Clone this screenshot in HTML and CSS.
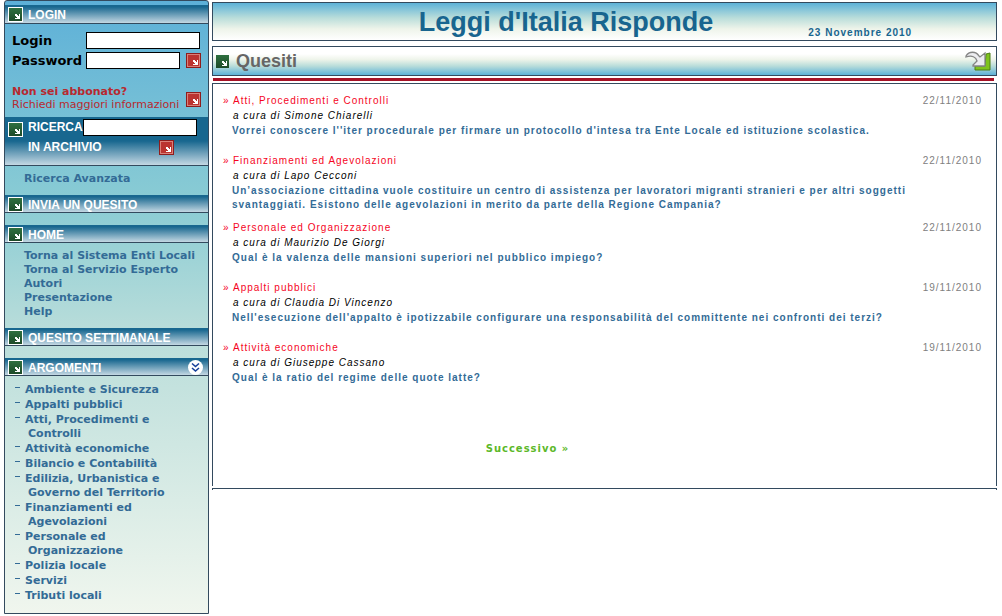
FILE: index.html
```html
<!DOCTYPE html>
<html lang="it">
<head>
<meta charset="utf-8">
<title>Leggi d'Italia Risponde</title>
<link rel="stylesheet" href="styles.css">
</head>
<body>
<svg class="defs" aria-hidden="true">
  <defs>
    <symbol id="corner" viewBox="0 0 13 13">
      <path d="M6 6h2v1h1v1h1V6h1v5H6v-1h2V9H7V8H6z" fill="#fff"/>
    </symbol>
    <symbol id="send" viewBox="0 0 15 15">
      <path d="M0 0h15v15H0z" fill="#8e1c1c"/>
      <path d="M1 1h13v13H1z" fill="#d98078"/>
      <path d="M2 2h11v11H2z" fill="#bb3430"/>
      <path d="M7 7h2v1h1v1h1V7h1v5H7v-1h2v-1H8V9H7z" fill="#fff"/>
    </symbol>
  </defs>
</svg>
<div class="page">
  <aside class="sidebar">
    <h2 class="bar"><svg class="mark"><use href="#corner"/></svg>LOGIN</h2>
    <form class="login">
      <div class="field"><label for="user">Login</label><input id="user" type="text" class="wide"></div>
      <div class="field"><label for="pass">Password</label><input id="pass" type="password"><button type="button" class="send" aria-label="Entra"><svg><use href="#send"/></svg></button></div>
      <div class="subscribe">
        <p><strong>Non sei abbonato?</strong><br><a href="#">Richiedi maggiori informazioni</a></p>
        <button type="button" class="send" aria-label="Richiedi"><svg><use href="#send"/></svg></button>
      </div>
    </form>
    <form class="search">
      <svg class="mark"><use href="#corner"/></svg>
      <div class="search-body">
        <div class="search-row"><label for="query">RICERCA</label><input id="query" type="text" class="wide"></div>
        <div class="search-row archive"><label for="query">IN ARCHIVIO</label><button type="button" class="send" aria-label="Cerca"><svg><use href="#send"/></svg></button></div>
      </div>
    </form>
    <p class="advanced"><a href="#">Ricerca Avanzata</a></p>
    <h2 class="bar"><svg class="mark"><use href="#corner"/></svg><a href="#">INVIA UN QUESITO</a></h2>
    <h2 class="bar spaced"><svg class="mark"><use href="#corner"/></svg>HOME</h2>
    <ul class="links">
      <li><a href="#">Torna al Sistema Enti Locali</a></li>
      <li><a href="#">Torna al Servizio Esperto</a></li>
      <li><a href="#">Autori</a></li>
      <li><a href="#">Presentazione</a></li>
      <li><a href="#">Help</a></li>
    </ul>
    <h2 class="bar"><svg class="mark"><use href="#corner"/></svg><a href="#">QUESITO SETTIMANALE</a></h2>
    <h2 class="bar spaced"><svg class="mark"><use href="#corner"/></svg>ARGOMENTI
      <button type="button" class="toggle" aria-label="Mostra argomenti"><svg viewBox="0 0 15 15"><circle cx="7.500" cy="7.500" r="7.500" fill="#fff"/><path d="M4 3.500l3.500 3L11 3.500M4 8l3.500 3L11 8" fill="none" stroke="#17409a" stroke-width="1.600"/></svg></button>
    </h2>
    <ul class="topics">
      <li><a href="#">Ambiente e Sicurezza</a></li>
      <li><a href="#">Appalti pubblici</a></li>
      <li><a href="#">Atti, Procedimenti e Controlli</a></li>
      <li><a href="#">Attività economiche</a></li>
      <li><a href="#">Bilancio e Contabilità</a></li>
      <li><a href="#">Edilizia, Urbanistica e Governo del Territorio</a></li>
      <li><a href="#">Finanziamenti ed Agevolazioni</a></li>
      <li><a href="#">Personale ed Organizzazione</a></li>
      <li><a href="#">Polizia locale</a></li>
      <li><a href="#">Servizi</a></li>
      <li><a href="#">Tributi locali</a></li>
    </ul>
  </aside>
  <main class="main">
    <header class="banner">
      <h1>Leggi d'Italia Risponde</h1>
      <span class="today">23 Novembre 2010</span>
    </header>
    <div class="section">
      <svg class="section-mark"><use href="#corner"/></svg>
      <h2>Quesiti</h2>
      <a href="#" class="back" aria-label="Indietro"><svg viewBox="0 0 26 20">
        <path d="M21 3l4-1v17H10v-4h10z" fill="#7fc31c" stroke="#4d7f16"/>
        <path d="M1 5C4 0 11 0 14 5l1 1 5-4v13H8v-1l4-4C11 6 7 4 1 6z" fill="#ececf0" stroke="#858585" stroke-width="1.300"/>
      </svg></a>
    </div>
    <div class="rule"></div>
    <section class="list">
      <article>
        <div class="head"><a href="#">Atti, Procedimenti e Controlli</a><time>22/11/2010</time></div>
        <p class="author">a cura di Simone Chiarelli</p>
        <p class="question"><a href="#">Vorrei conoscere l''iter procedurale per firmare un protocollo d'intesa tra Ente Locale ed istituzione scolastica.</a></p>
      </article>
      <article>
        <div class="head"><a href="#">Finanziamenti ed Agevolazioni</a><time>22/11/2010</time></div>
        <p class="author">a cura di Lapo Cecconi</p>
        <p class="question"><a href="#">Un’associazione cittadina vuole costituire un centro di assistenza per lavoratori migranti stranieri e per altri soggetti svantaggiati. Esistono delle agevolazioni in merito da parte della Regione Campania?</a></p>
      </article>
      <article>
        <div class="head"><a href="#">Personale ed Organizzazione</a><time>22/11/2010</time></div>
        <p class="author">a cura di Maurizio De Giorgi</p>
        <p class="question"><a href="#">Qual è la valenza delle mansioni superiori nel pubblico impiego?</a></p>
      </article>
      <article>
        <div class="head"><a href="#">Appalti pubblici</a><time>19/11/2010</time></div>
        <p class="author">a cura di Claudia Di Vincenzo</p>
        <p class="question"><a href="#">Nell'esecuzione dell'appalto è ipotizzabile configurare una responsabilità del committente nei confronti dei terzi?</a></p>
      </article>
      <article>
        <div class="head"><a href="#">Attività economiche</a><time>19/11/2010</time></div>
        <p class="author">a cura di Giuseppe Cassano</p>
        <p class="question"><a href="#">Qual è la ratio del regime delle quote latte?</a></p>
      </article>
      <nav class="pager"><a href="#">Successivo »</a></nav>
    </section>
    <div class="foot"></div>
  </main>
</div>
</body>
</html>
```

FILE: styles.css
```css
* { box-sizing: border-box; }
body { margin: 0; background: #fff; font-family: "Liberation Sans", Arial, sans-serif; }
h1, h2, p, ul { margin: 0; padding: 0; }
ul { list-style: none; }
a { color: inherit; text-decoration: none; }
svg { display: block; }
button { padding: 0; border: 0; background: none; cursor: pointer; }
.defs { position: absolute; width: 0; height: 0; }

.page { display: flex; align-items: flex-start; gap: 3px; padding: 0 5px 0 4px; }

.sidebar {
  flex: 0 0 205px;
  padding-top: 4px;
  border: 1px solid #334a5e;
  border-radius: 3px 3px 0 0;
  background: linear-gradient(#5db0d8, #8accd4 33%, #b9ddda 54%, #f0f6ee);
  font: bold 11px/14px "DejaVu Sans", Verdana, sans-serif;
  color: #336b96;
}
.bar {
  display: flex;
  align-items: flex-start;
  gap: 5px;
  height: 19px;
  padding: 2px 5px 0 3px;
  border-bottom: 1px solid #334a5e;
  background: linear-gradient(#18678f 10%, #c4d8e3);
  font: bold 12px/17px "Liberation Sans", Arial, sans-serif;
  color: #fff;
}
.bar ~ .bar { height: 18px; }
.bar.spaced { margin-top: 12px; }
.mark { flex: none; width: 15px; height: 15px; border: 1px solid #fff; background: linear-gradient(#2f7040, #1d4a28); }
.toggle { margin-left: auto; }
.toggle svg { width: 15px; height: 15px; }

.login { padding: 8px 5px 6px 7px; color: #000; }
.field { display: flex; align-items: center; height: 17px; margin-bottom: 3px; font-size: 13px; line-height: 17px; }
.field label { flex: 0 0 74px; }
input { width: 94px; height: 17px; padding: 0 2px; border: 1px solid #000; border-radius: 0; background: #fff; font: 11px "DejaVu Sans", Verdana, sans-serif; }
input.wide { width: 114px; }
.send { flex: none; margin-left: 6px; }
.send svg { width: 15px; height: 15px; }
.subscribe { display: flex; align-items: flex-end; justify-content: space-between; margin-top: 15px; padding-right: 2px; color: #b8292f; line-height: 13px; }
.subscribe p { padding-top: 1px; white-space: nowrap; }
.subscribe a { font-weight: normal; }
.subscribe .send { margin: 0 0 4px; }

.search {
  display: flex;
  gap: 5px;
  height: 49px;
  padding: 2px 3px 0;
  border-bottom: 1px solid #334a5e;
  background: linear-gradient(#18678f 50%, #c4d8e3);
  font: bold 12px/17px "Liberation Sans", Arial, sans-serif;
  color: #fff;
}
.search .mark { margin-top: 3px; }
.search-row { display: flex; }
.search-row label { flex: 0 0 53px; }
.archive { padding-top: 3px; }
.archive label { flex: 0 0 131px; }
.archive .send { margin: 0; }

.advanced { padding: 6px 0 9px 19px; }
.links { padding: 6px 0 9px 19px; white-space: nowrap; }
.topics { padding: 7px 20px 9px 10px; }
.topics li { display: flex; gap: 5px; margin-bottom: 1px; }
.topics li::before { content: ""; flex: 0 0 5px; height: 1px; margin-top: 4px; background: #336b96; }
.topics a { padding-left: 3px; text-indent: -3px; }

.main { flex: 1; min-width: 0; padding-top: 2px; }
.banner {
  display: flex;
  justify-content: center;
  align-items: flex-end;
  gap: 95px;
  height: 39px;
  padding-left: 122px;
  border: 1px solid #334a5e;
  background: linear-gradient(#5db2d8, #b9ddda 40%, #eef4ea 70%, #fff);
  color: #18658f;
}
.banner h1 { font-size: 27px; line-height: 35px; white-space: nowrap; }
.today { font-weight: bold; font-size: 10px; line-height: 15px; letter-spacing: 1px; white-space: nowrap; }
.section {
  display: flex;
  align-items: center;
  gap: 7px;
  height: 30px;
  margin-top: 5px;
  padding: 0 5px 0 3px;
  border: 1px solid #334a5e;
  background: linear-gradient(#fff 25%, #eef4ea 45%, #b9ddda 68%, #5db2d8);
  color: #666;
}
.section h2 { font-size: 18px; line-height: 28px; }
.section-mark { width: 13px; height: 13px; background: linear-gradient(#2f7040, #1d4a28); }
.back { margin-left: auto; }
.back svg { width: 26px; height: 20px; }
.rule { height: 3px; margin: 2px 3px 2px 1px; background: #a51226; }
.list {
  padding: 9px 14px 30px 10px;
  border: 1px solid #334a5e;
  border-bottom: 0;
  font-size: 10px;
  line-height: 15px;
  letter-spacing: 1px;
}
.head { display: flex; justify-content: space-between; color: #f5051e; }
.head a::before { content: "»"; display: inline-block; width: 10px; }
.head time { color: #808080; }
.author { padding-left: 10px; font-style: italic; color: #000; }
.question { min-height: 22px; margin-bottom: 8px; padding: 1px 40px 0 9px; font-weight: bold; line-height: 14px; color: #336b96; }
.pager { margin: 49px 150px 0 0; text-align: center; font: bold 10px/15px "DejaVu Sans", Verdana, sans-serif; color: #5cb829; }
.foot { height: 2px; margin-top: 2px; border: 1px solid #334a5e; border-bottom: 0; }
```
